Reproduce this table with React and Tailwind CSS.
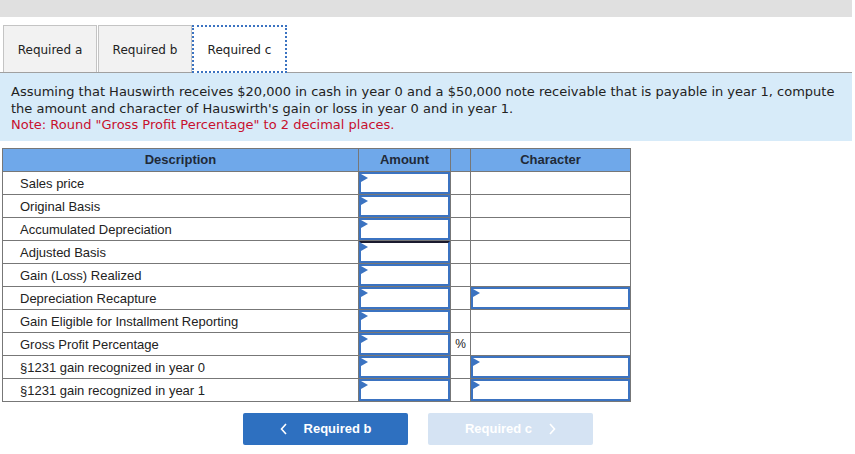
const ROWS = [
  { label: 'Sales price', char: false },
  { label: 'Original Basis', char: false },
  { label: 'Accumulated Depreciation', char: false },
  { label: 'Adjusted Basis', char: false, dark: true },
  { label: 'Gain (Loss) Realized', char: false },
  { label: 'Depreciation Recapture', char: true },
  { label: 'Gain Eligible for Installment Reporting', char: false },
  { label: 'Gross Profit Percentage', char: false, pct: true },
  { label: '§1231 gain recognized in year 0', char: true },
  { label: '§1231 gain recognized in year 1', char: true },
]

function InputBox({ dark }) {
  return (
    <div className={`relative h-[22px] bg-white border-2 border-[#3b73c1] ${dark ? 'border-t-[#1a1a2e]' : ''}`}>
      <div className="absolute left-0 top-0 w-0 h-0 border-y-[4px] border-y-transparent border-l-[7px] border-l-[#3b73c1]" />
    </div>
  )
}

export default function App() {
  return (
    <div className="w-[855px] h-[454px] bg-white relative overflow-hidden" style={{ fontFamily: '"DejaVu Sans", Verdana, sans-serif' }}>
      <div className="w-[852px] h-[17px] bg-[#e0e0e0]" />

      {/* Tabs */}
      <div className="flex items-end mt-[8px] w-[852px] border-b border-[#a0a0a0] h-[48px]">
        <div className="ml-[3px] w-[94px] h-[47px] pt-px flex items-center justify-center bg-[#f2f2f2] border border-[#c4c4c4] border-b-0 text-[12px] text-[#222]">Required a</div>
        <div className="ml-[1px] w-[94px] h-[47px] pt-px flex items-center justify-center bg-[#f2f2f2] border border-[#c4c4c4] border-b-0 text-[12px] text-[#222]">Required b</div>
        <div className="w-[95px] h-[48px] -mb-px pt-px flex items-center justify-center bg-white border-2 border-dotted border-[#3b73c1] text-[12px] text-[#222]">Required c</div>
      </div>

      {/* Instructions */}
      <div className="w-[852px] h-[68px] bg-[#d7ebf9] px-[11px] pt-[11px] text-[13px] leading-[16.5px] text-[#222]">
        <p>Assuming that Hauswirth receives $20,000 in cash in year 0 and a $50,000 note receivable that is payable in year 1, compute the amount and character of Hauswirth's gain or loss in year 0 and in year 1.</p>
        <p className="text-[#c8102e]">Note: Round "Gross Profit Percentage" to 2 decimal places.</p>
      </div>

      {/* Table */}
      <table className="mt-[7px] ml-[2px] w-[629px] table-fixed border-collapse border border-[#777] text-[13px] text-[#222]" style={{ fontFamily: '"Liberation Sans", Arial, sans-serif' }}>
        <colgroup>
          <col className="w-[356px]" />
          <col className="w-[92px]" />
          <col className="w-[20px]" />
          <col className="w-[160px]" />
        </colgroup>
        <thead>
          <tr className="h-[23px] bg-[#6fa8ea]">
            <th className="border border-[#777] p-0 font-bold text-[13px] text-[#1f2a38]">Description</th>
            <th className="border border-[#777] p-0 font-bold text-[13px] text-[#1f2a38]">Amount</th>
            <th className="border border-[#777] p-0" />
            <th className="border border-[#777] p-0 font-bold text-[13px] text-[#1f2a38]">Character</th>
          </tr>
        </thead>
        <tbody>
          {ROWS.map((r, i) => (
            <tr key={i} className="h-[23px]">
              <td className="border border-[#777] p-0 pl-[17px] pt-px">{r.label}</td>
              <td className="border border-[#777] p-0"><InputBox dark={r.dark} /></td>
              <td className="border border-[#777] p-0 text-center text-[12px]">{r.pct ? '%' : ''}</td>
              <td className="border border-[#777] p-0">{r.char ? <InputBox /> : null}</td>
            </tr>
          ))}
        </tbody>
      </table>

      {/* Nav buttons */}
      <div className="flex gap-[20px] ml-[243px] mt-[11px]" style={{ fontFamily: '"Liberation Sans", Arial, sans-serif' }}>
        <div className="w-[165px] h-[32px] rounded-[2px] bg-[#2e70c0] text-white font-bold text-[13px] flex items-center justify-center">
          <svg width="8" height="12" viewBox="0 0 8 12" className="mr-[16px]"><path d="M6 1 L1.5 6 L6 11" stroke="white" strokeWidth="1.6" fill="none" /></svg>
          Required b
        </div>
        <div className="w-[165px] h-[32px] rounded-[2px] bg-[#d5e3f3] text-white font-bold text-[13px] flex items-center justify-center">
          Required c
          <svg width="8" height="12" viewBox="0 0 8 12" className="ml-[16px]"><path d="M2 1 L6.5 6 L2 11" stroke="white" strokeWidth="1.6" fill="none" /></svg>
        </div>
      </div>
    </div>
  )
}
